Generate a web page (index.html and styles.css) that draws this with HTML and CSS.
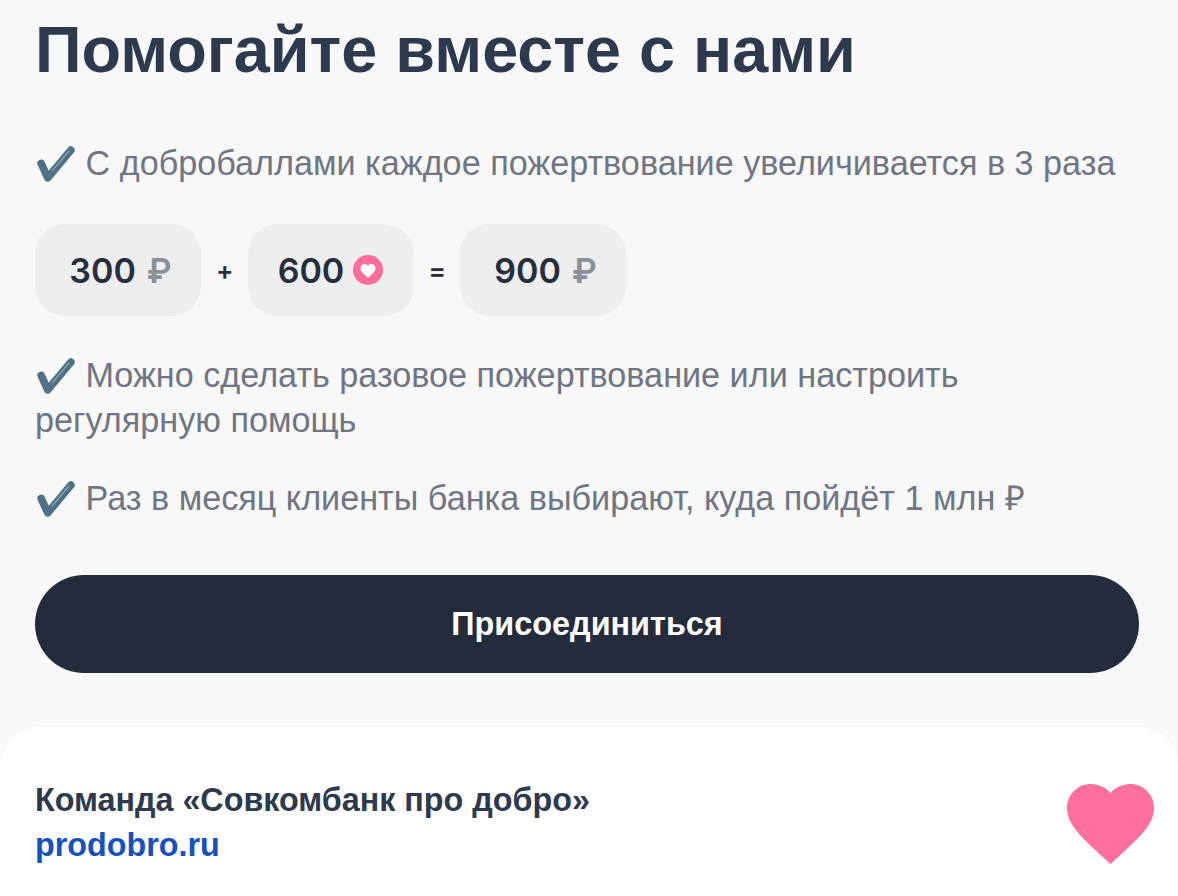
FILE: index.html
```html
<!DOCTYPE html>
<html lang="ru">
<head>
    <meta charset="UTF-8">
    <meta name="viewport" content="width=device-width, initial-scale=1.0">
    <title>Помогайте вместе с нами</title>
    <link rel="stylesheet" href="styles.css">
</head>
<body>
    <div class="container">
        <h1>Помогайте вместе с нами</h1>

        <p class="point">
            <svg class="check" viewBox="0 0 40 40"><path d="M6 19 L12.5 33 L35 6" fill="none" stroke="#4f7183" stroke-width="7.5" stroke-linecap="round" stroke-linejoin="round"/><path d="M17 26 L33 7" fill="none" stroke="#8fa9b6" stroke-width="1.2" stroke-linecap="round"/></svg>
            С добробаллами каждое пожертвование увеличивается в 3 раза
        </p>

        <div class="sum">
            <div class="pill pill-rub">300 <span class="rub">₽</span></div>
            <span class="sign">+</span>
            <div class="pill">600
                <svg class="coin" viewBox="0 0 30 30"><circle cx="15" cy="15" r="15" fill="#fb6d9d"/><path transform="translate(6 6.8) scale(0.75)" d="M12 21.35l-1.45-1.32C5.4 15.36 2 12.28 2 8.5 2 5.42 4.42 3 7.5 3c1.74 0 3.41.81 4.5 2.09C13.09 3.81 14.76 3 16.5 3 19.58 3 22 5.42 22 8.5c0 3.78-3.4 6.86-8.55 11.54L12 21.35z" fill="#fff"/></svg>
            </div>
            <span class="sign">=</span>
            <div class="pill pill-rub">900 <span class="rub">₽</span></div>
        </div>

        <p class="point">
            <svg class="check" viewBox="0 0 40 40"><path d="M6 19 L12.5 33 L35 6" fill="none" stroke="#4f7183" stroke-width="7.5" stroke-linecap="round" stroke-linejoin="round"/><path d="M17 26 L33 7" fill="none" stroke="#8fa9b6" stroke-width="1.2" stroke-linecap="round"/></svg>
            Можно сделать разовое пожертвование или настроить регулярную помощь
        </p>

        <p class="point">
            <svg class="check" viewBox="0 0 40 40"><path d="M6 19 L12.5 33 L35 6" fill="none" stroke="#4f7183" stroke-width="7.5" stroke-linecap="round" stroke-linejoin="round"/><path d="M17 26 L33 7" fill="none" stroke="#8fa9b6" stroke-width="1.2" stroke-linecap="round"/></svg>
            Раз в месяц клиенты банка выбирают, куда пойдёт 1 млн ₽
        </p>

        <button class="join">Присоединиться</button>
    </div>

    <div class="footer">
        <div class="team">
            <strong>Команда «Совкомбанк про добро»</strong>
            <a href="#">prodobro.ru</a>
        </div>
        <svg class="heart" viewBox="2 3 20 18.35"><path d="M12 21.35l-1.45-1.32C5.4 15.36 2 12.28 2 8.5 2 5.42 4.42 3 7.5 3c1.74 0 3.41.81 4.5 2.09C13.09 3.81 14.76 3 16.5 3 19.58 3 22 5.42 22 8.5c0 3.78-3.4 6.86-8.55 11.54L12 21.35z" fill="#fd6f9e"/></svg>
    </div>
</body>
</html>
```

FILE: styles.css
```css
html, body {
    margin: 0;
    height: 100%;
}
body {
    font-family: 'Liberation Sans', Arial, sans-serif;
    background-color: #f8f8f8;
    height: 896px;
    overflow: hidden;
    color: #262e3d;
}
.container {
    padding: 12px 39px 0 35px;
}
h1 {
    margin: 0 0 53px;
    font-size: 64.75px;
    line-height: 76px;
    font-weight: bold;
    color: #2d3a4e;
}
.point {
    margin: 0 0 33px;
    font-size: 34.2px;
    line-height: 45px;
    color: #6f7682;
}
.check {
    width: 41px;
    height: 41px;
    vertical-align: -10px;
}
.sum {
    display: flex;
    align-items: center;
    gap: 15px;
    margin: 38px 0 37px;
}
.pill {
    width: 166px;
    height: 92px;
    box-sizing: border-box;
    display: flex;
    align-items: center;
    justify-content: center;
    gap: 9px;
    background-color: #eeeeee;
    border-radius: 30px;
    font-family: Inter, sans-serif;
    font-size: 34px;
    font-weight: 600;
}
.pill-rub {
    gap: 11px;
    padding-left: 5px;
}
.rub {
    color: #8b9098;
}
.coin {
    width: 30px;
    height: 30px;
}
.sign {
    width: 16.5px;
    text-align: center;
    font-family: Inter, sans-serif;
    font-size: 26px;
    font-weight: 600;
}
.join {
    display: block;
    width: 100%;
    height: 98px;
    margin-top: 54px;
    border: none;
    border-radius: 49px;
    background-color: #242c3b;
    color: #fff;
    font-family: 'Liberation Sans', Arial, sans-serif;
    font-size: 32.4px;
    font-weight: bold;
}
.footer {
    display: flex;
    justify-content: space-between;
    align-items: center;
    box-sizing: border-box;
    margin-top: 54px;
    height: 169px;
    padding: 22px 24px 0 35px;
    background-color: #fff;
    border-radius: 40px 40px 0 0;
}
.team {
    display: flex;
    flex-direction: column;
    gap: 8px;
    font-size: 32.3px;
    line-height: 37px;
    color: #2d3a4e;
}
.team a {
    color: #1751bd;
    font-weight: bold;
    text-decoration: none;
}
.heart {
    width: 87px;
    height: 80px;
    margin-top: 3px;
}
```
